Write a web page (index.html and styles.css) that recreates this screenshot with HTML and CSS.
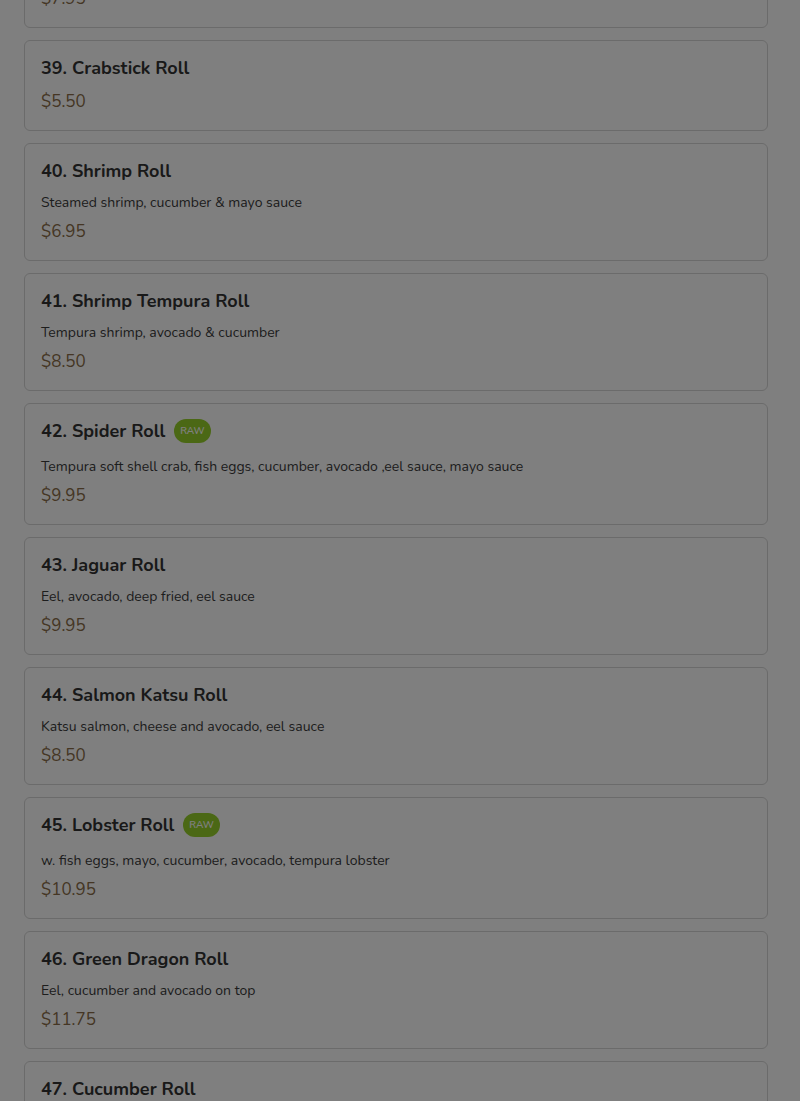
FILE: index.html
```html
<!DOCTYPE html>
<html lang="en">
<head>
<meta charset="utf-8">
<title>Menu</title>
<link rel="stylesheet" href="styles.css">
</head>
<body>
<main class="menu">
  <section class="item">
    <div class="item-head"><h3 class="item-name">38. Philadelphia Roll</h3></div>
    <p class="item-desc">Smoked salmon, cream cheese &amp; avocado</p>
    <div class="item-price">$7.95</div>
  </section>
  <section class="item">
    <div class="item-head"><h3 class="item-name">39. Crabstick Roll</h3></div>
    <div class="item-price">$5.50</div>
  </section>
  <section class="item">
    <div class="item-head"><h3 class="item-name">40. Shrimp Roll</h3></div>
    <p class="item-desc">Steamed shrimp, cucumber &amp; mayo sauce</p>
    <div class="item-price">$6.95</div>
  </section>
  <section class="item">
    <div class="item-head"><h3 class="item-name">41. Shrimp Tempura Roll</h3></div>
    <p class="item-desc">Tempura shrimp, avocado &amp; cucumber</p>
    <div class="item-price">$8.50</div>
  </section>
  <section class="item">
    <div class="item-head"><h3 class="item-name">42. Spider Roll</h3><span class="badge">RAW</span></div>
    <p class="item-desc">Tempura soft shell crab, fish eggs, cucumber, avocado ,eel sauce, mayo sauce</p>
    <div class="item-price">$9.95</div>
  </section>
  <section class="item">
    <div class="item-head"><h3 class="item-name">43. Jaguar Roll</h3></div>
    <p class="item-desc">Eel, avocado, deep fried, eel sauce</p>
    <div class="item-price">$9.95</div>
  </section>
  <section class="item">
    <div class="item-head"><h3 class="item-name">44. Salmon Katsu Roll</h3></div>
    <p class="item-desc">Katsu salmon, cheese and avocado, eel sauce</p>
    <div class="item-price">$8.50</div>
  </section>
  <section class="item">
    <div class="item-head"><h3 class="item-name">45. Lobster Roll</h3><span class="badge">RAW</span></div>
    <p class="item-desc">w. fish eggs, mayo, cucumber, avocado, tempura lobster</p>
    <div class="item-price">$10.95</div>
  </section>
  <section class="item">
    <div class="item-head"><h3 class="item-name">46. Green Dragon Roll</h3></div>
    <p class="item-desc">Eel, cucumber and avocado on top</p>
    <div class="item-price">$11.75</div>
  </section>
  <section class="item">
    <div class="item-head"><h3 class="item-name">47. Cucumber Roll</h3></div>
    <p class="item-desc">Fresh cucumber</p>
    <div class="item-price">$4.50</div>
  </section>
</main>
<div class="backdrop"></div>
</body>
</html>
```

FILE: styles.css
```css
html, body {
  margin: 0;
  padding: 0;
  background: #ffffff;
  font-family: "Nunito", "Lato", "Open Sans", sans-serif;
  color: #333333;
  overflow: hidden;
}

.menu {
  display: flex;
  flex-direction: column;
  gap: 12px;
  padding: 0 32px 0 24px;
  margin-top: -90px;
}

.item {
  display: flex;
  flex-direction: column;
  padding: 14px 16px 16px;
  border: 1px solid #d6d6d6;
  border-radius: 6px;
  background: #ffffff;
}

.item-head {
  display: flex;
  align-items: flex-start;
  min-height: 26px;
  margin-bottom: 9px;
}

.item-name {
  margin: 0;
  font-size: 18px;
  line-height: 26px;
  font-weight: 700;
  color: #333333;
}

.badge {
  margin: 1px 0 5px 9px;
  height: 24px;
  padding: 0 6px;
  border-radius: 12px;
  background: #96d02a;
  color: #ffffff;
  font-size: 10px;
  font-weight: 600;
  line-height: 25px;
}

.item-desc {
  margin: 0 0 7px;
  font-size: 14px;
  line-height: 20px;
  color: #3a3a3a;
}

.item-price {
  font-size: 17px;
  line-height: 24px;
  color: #8a6d48;
}

.backdrop {
  position: fixed;
  inset: 0;
  background: rgba(0, 0, 0, 0.5);
}
```
